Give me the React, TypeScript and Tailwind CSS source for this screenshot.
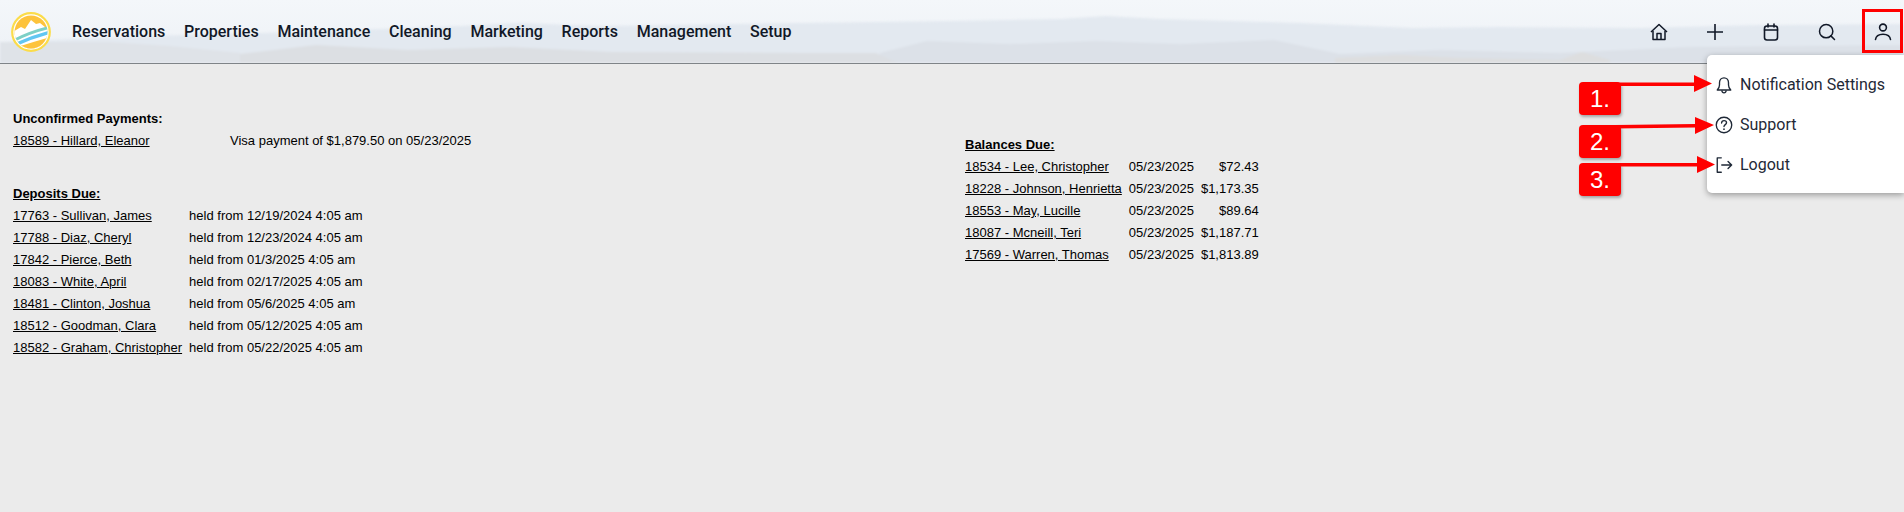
import { Search } from "lucide-react";

const navItems = ["Reservations", "Properties", "Maintenance", "Cleaning", "Marketing", "Reports", "Management", "Setup"];

const deposits = [
  ["17763 - Sullivan, James", "held from 12/19/2024 4:05 am"],
  ["17788 - Diaz, Cheryl", "held from 12/23/2024 4:05 am"],
  ["17842 - Pierce, Beth", "held from 01/3/2025 4:05 am"],
  ["18083 - White, April", "held from 02/17/2025 4:05 am"],
  ["18481 - Clinton, Joshua", "held from 05/6/2025 4:05 am"],
  ["18512 - Goodman, Clara", "held from 05/12/2025 4:05 am"],
  ["18582 - Graham, Christopher", "held from 05/22/2025 4:05 am"],
];

const balances = [
  ["18534 - Lee, Christopher", "05/23/2025", "$72.43"],
  ["18228 - Johnson, Henrietta", "05/23/2025", "$1,173.35"],
  ["18553 - May, Lucille", "05/23/2025", "$89.64"],
  ["18087 - Mcneill, Teri", "05/23/2025", "$1,187.71"],
  ["17569 - Warren, Thomas", "05/23/2025", "$1,813.89"],
];

function Logo() {
  return (
    <svg viewBox="0 0 40 40" className="h-[40px] w-[40px] shrink-0">
      <defs>
        <clipPath id="logo-clip">
          <circle cx="20" cy="20" r="16.5" />
        </clipPath>
      </defs>
      <circle cx="20" cy="20" r="18.8" fill="#fff" stroke="#fbdc4a" strokeWidth="2.2" />
      <g clipPath="url(#logo-clip)">
        <rect width="40" height="40" fill="#fdc33c" />
        <path d="M0 21 L10 15 L14 17 L20 8 L25 12 L29 11 L40 20 V40 H0 Z" fill="#fff" />
        <path d="M0 30 Q18 20 40 15" fill="none" stroke="#7ed0c6" strokeWidth="3" />
        <path d="M0 34.5 Q20 25 40 20" fill="none" stroke="#62c6f2" strokeWidth="3.4" />
        <path d="M0 40 V37 Q22 30 40 25 V40 Z" fill="#fdc33c" />
      </g>
    </svg>
  );
}

// hazy ridge lines behind the nav, traced from the header photo
function Mountains() {
  return (
    <svg viewBox="0 0 1904 63" preserveAspectRatio="none" className="absolute inset-0 h-full w-full blur-[1px]">
      <path d="M0 42 L150 36 L300 32 L460 26 L520 23 L600 26 L800 23 L950 21 L1060 19 L1106 16 L1160 19 L1300 23 L1412 28 L1500 27 L1640 28 L1760 25 L1904 24 V64 H0 Z" fill="#e3e9f0" />
      <path d="M0 42 L110 42 L170 46 L240 53 V64 H0 Z" fill="#dfe3e8" />
      <path d="M880 53 L927 41 L1010 44 L1096 41 L1180 44 L1274 40 L1340 54 L1440 50 L1560 53 L1687 47 L1904 45 V64 H880 Z" fill="#dce1e8" />
      <path d="M240 54 L316 45 L408 50 L510 47 L612 52 L800 53 L876 53 L900 64 H240 Z" fill="#dcdfe3" />
      <path d="M1335 58 L1400 55 L1463 58 L1560 60 L1582 52 L1610 60 V64 H1335 Z" fill="#dddedf" />
    </svg>
  );
}

function HomeIcon() {
  return (
    <svg viewBox="0 0 20 20" className="h-[20px] w-[20px]" fill="none" stroke="currentColor" strokeWidth="1.5" strokeLinejoin="round">
      <path d="M2 10 L10 2.5 L18 10" />
      <path d="M4 9 V17.5 H16 V9" />
      <path d="M8 17.5 V11.5 H12 V17.5" />
    </svg>
  );
}

function PlusIcon() {
  return (
    <svg viewBox="0 0 20 20" className="h-[20px] w-[20px]" fill="none" stroke="currentColor" strokeWidth="1.6">
      <path d="M2 10 H18 M10 2 V18" />
    </svg>
  );
}

function CalendarIcon() {
  return (
    <svg viewBox="0 0 20 20" className="h-[20px] w-[20px]" fill="none" stroke="currentColor" strokeWidth="1.6" strokeLinecap="round">
      <rect x="3.5" y="4" width="13" height="14" rx="2.5" />
      <path d="M3.5 8 H16.5 M7 2 V5 M13 2 V5" />
    </svg>
  );
}

function UserIcon() {
  return (
    <svg viewBox="0 0 20 20" className="h-[20px] w-[20px]" fill="none" stroke="currentColor" strokeWidth="1.6" strokeLinecap="round">
      <circle cx="10" cy="5.5" r="3.4" />
      <path d="M2.5 17.5 C3 13.5 6 12.2 10 12.2 C14 12.2 17 13.5 17.5 17.5" />
    </svg>
  );
}

function BellIcon() {
  return (
    <svg viewBox="0 0 20 20" className="h-[18px] w-[18px]" fill="none" stroke="currentColor" strokeWidth="1.5" strokeLinejoin="round">
      <path d="M2.5 15.5 C4 14 5 13 5 10 V7.5 C5 4.5 7 2 10 2 C13 2 15 4.5 15 7.5 V10 C15 13 16 14 17.5 15.5 Z" />
      <path d="M7.5 16 C7.8 18 9 18.7 10 18.7 C11 18.7 12.2 18 12.5 16" />
    </svg>
  );
}

function HelpIcon() {
  return (
    <svg viewBox="0 0 20 20" className="h-[18px] w-[18px]" fill="none" stroke="currentColor" strokeWidth="1.5" strokeLinecap="round">
      <circle cx="10" cy="10" r="8.6" />
      <path d="M7.3 7.8 C7.4 6 8.7 5.2 10 5.2 C11.6 5.2 12.8 6.2 12.8 7.6 C12.8 9.6 10 9.6 10 11.8" />
      <path d="M10 14.6 V14.7" strokeWidth="1.9" />
    </svg>
  );
}

function LogoutIcon() {
  return (
    <svg viewBox="0 0 20 20" className="h-[18px] w-[18px]" fill="none" stroke="currentColor" strokeWidth="1.5" strokeLinecap="round" strokeLinejoin="round">
      <path d="M7 2 H2.5 V18 H7" />
      <path d="M7.5 10 H18.5 M14.5 6 L18.5 10 L14.5 14" />
    </svg>
  );
}

function NameLink({ children }: { children: string }) {
  return <a className="text-black underline">{children}</a>;
}

function Callout({ label, top }: { label: string; top: string }) {
  return (
    <div className={`absolute left-[1579px] flex h-[33px] w-[42px] items-center justify-center rounded-[4px] bg-[#ff0000] text-[24px] leading-none text-white shadow-[1px_2px_3px_rgba(0,0,0,0.3)] ${top}`}>
      {label}
    </div>
  );
}

export default function App() {
  return (
    <div className="relative h-[512px] w-[1904px] overflow-hidden bg-[#ebebeb] font-['Liberation_Sans',sans-serif] text-[13px] text-black">
      <header className="relative flex h-[64px] items-center overflow-hidden border-b border-[#7f8488] bg-gradient-to-b from-[#f4f7fa] to-[#edf1f6] pr-[11px] pl-[11px]">
        <Mountains />
        <div className="relative flex w-full items-center">
          <Logo />
          <nav className="ml-[21px] flex gap-[18.75px] font-['Roboto',sans-serif] text-[16px] font-medium text-[#111827]">
            {navItems.map((item) => (
              <span key={item}>{item}</span>
            ))}
          </nav>
          <div className="ml-auto flex items-center gap-[36px] text-[#111827]">
            <HomeIcon />
            <PlusIcon />
            <CalendarIcon />
            <Search size={20} strokeWidth={1.8} />
            <UserIcon />
          </div>
        </div>
      </header>

      <main className="flex items-start pl-[13px]">
        <div className="w-[952px] pt-[44px]">
          <div className="font-bold leading-[22px]">Unconfirmed Payments:</div>
          <div className="flex leading-[22px]">
            <span className="w-[217px]"><NameLink>18589 - Hillard, Eleanor</NameLink></span>
            <span>Visa payment of $1,879.50 on 05/23/2025</span>
          </div>
          <div className="mt-[31px] font-bold leading-[22px] underline">Deposits Due:</div>
          <table className="border-collapse leading-[22px]">
            <tbody>
              {deposits.map(([name, held]) => (
                <tr key={name}>
                  <td className="pr-[7px]"><NameLink>{name}</NameLink></td>
                  <td>{held}</td>
                </tr>
              ))}
            </tbody>
          </table>
        </div>
        <div className="pt-[70px]">
          <div className="font-bold leading-[22px] underline">Balances Due:</div>
          <table className="border-collapse leading-[22px]">
            <tbody>
              {balances.map(([name, date, amount]) => (
                <tr key={name}>
                  <td className="pr-[7px]"><NameLink>{name}</NameLink></td>
                  <td className="pr-[7px]">{date}</td>
                  <td className="text-right">{amount}</td>
                </tr>
              ))}
            </tbody>
          </table>
        </div>
      </main>

      <div className="absolute top-[55px] left-[1707px] w-[197px] rounded-l-[5px] bg-white pt-[10px] pb-[8px] font-['Roboto',sans-serif] text-[16px] text-[#1f2937] shadow-[0_2px_6px_rgba(0,0,0,0.35)]">
        <div className="flex h-[40px] items-center gap-[7px] pl-[8px]"><BellIcon />Notification Settings</div>
        <div className="flex h-[40px] items-center gap-[7px] pl-[8px]"><HelpIcon />Support</div>
        <div className="flex h-[40px] items-center gap-[7px] pl-[8px]"><LogoutIcon />Logout</div>
      </div>

      <div className="absolute top-[9px] left-[1862px] h-[44px] w-[41px] border-[3px] border-[#ff0000]" />

      <Callout label="1." top="top-[82px]" />
      <Callout label="2." top="top-[125px]" />
      <Callout label="3." top="top-[163px]" />
      <svg className="absolute top-0 left-0 h-[512px] w-[1904px]" viewBox="0 0 1904 512">
        <path d="M1615 82.5 L1694 82.5 V75 L1712 83.5 L1694 92 V86 L1615 86 Z" fill="#ff0000" />
        <path d="M1615 125 L1695 124 V117 L1714 125 L1695 134 V127.5 L1615 128.5 Z" fill="#ff0000" />
        <path d="M1615 163 L1697 163 V156 L1715 164.5 L1697 173 V166.5 L1615 166.5 Z" fill="#ff0000" />
      </svg>
    </div>
  );
}
